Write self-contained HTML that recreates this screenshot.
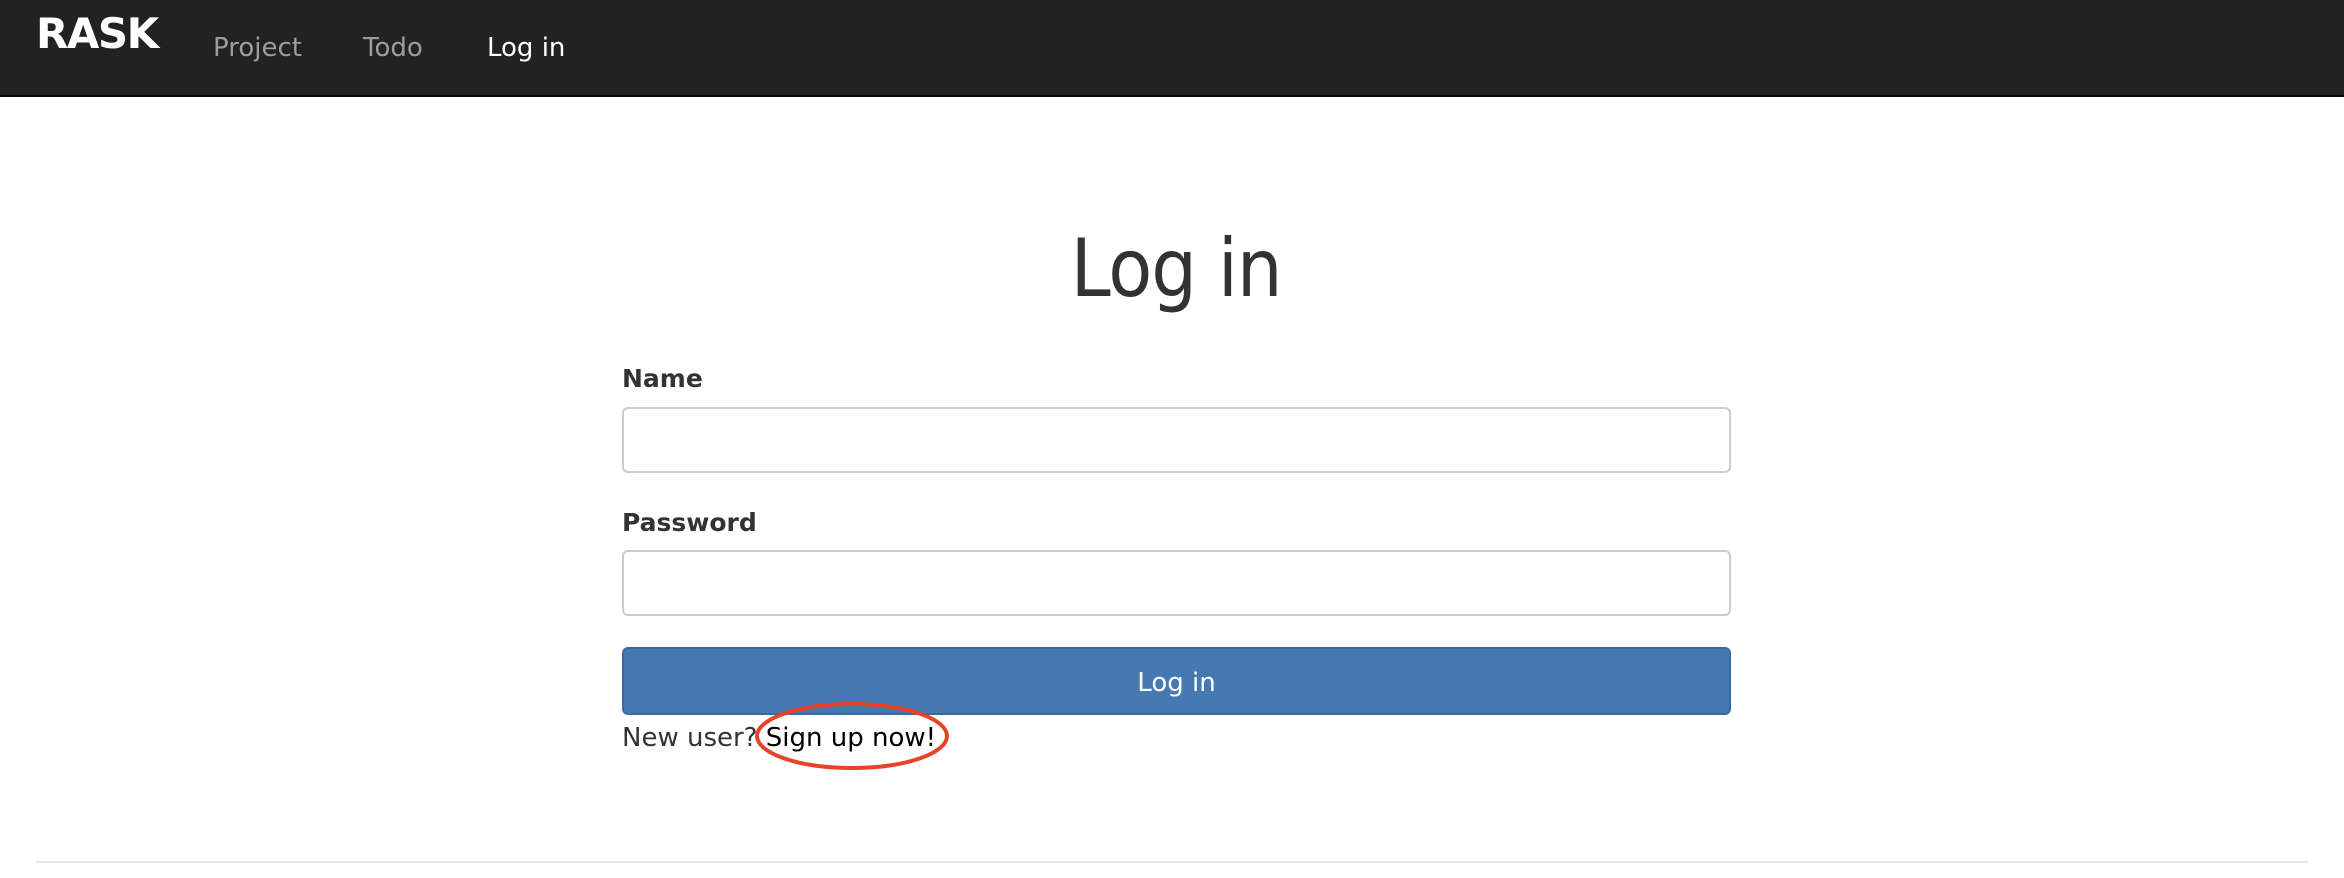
<!DOCTYPE html>
<html><head><meta charset="utf-8"><style>
*{margin:0;padding:0;box-sizing:border-box}
body{width:2344px;height:878px;background:#fff;font-family:"DejaVu Sans","Liberation Sans",sans-serif;color:#333;position:relative;overflow:hidden}
.nav{position:absolute;left:0;top:0;width:2344px;height:97px;background:#222;border-bottom:2px solid #080808}
.brand{position:absolute;left:36px;top:9px;font-weight:bold;font-size:42px;color:#fff;letter-spacing:-1.5px}
.nl{position:absolute;top:33px;font-size:26px;color:#9d9d9d}
h1{position:absolute;left:0;width:2352px;text-align:center;top:222px;font-family:"DejaVu Sans Condensed","DejaVu Sans",sans-serif;font-stretch:condensed;font-weight:normal;font-size:80px;letter-spacing:-1px;color:#333}
.lbl{position:absolute;left:622px;font-weight:bold;font-size:25px;color:#333}
.inp{position:absolute;left:622px;width:1109px;height:66px;border:2px solid #ccc;border-radius:6px;background:#fff}
.btn{position:absolute;left:622px;top:647px;width:1109px;height:68px;background:#4679b2;border:2px solid #3a6aa2;border-radius:6px;color:#fff;font-size:26px;text-align:center;line-height:68px}
.new{position:absolute;left:622px;top:723px;font-size:26px;color:#333}
.new span{color:#000}
hr{position:absolute;left:36px;top:861px;width:2272px;border:0;border-top:2px solid #e5e5e5}
</style></head><body>
<div class="nav">
<div class="brand">RASK</div>
<div class="nl" style="left:213px">Project</div>
<div class="nl" style="left:363px">Todo</div>
<div class="nl" style="left:487px;color:#fff">Log in</div>
</div>
<h1>Log in</h1>
<div class="lbl" style="top:364px">Name</div>
<div class="inp" style="top:407px"></div>
<div class="lbl" style="top:508px">Password</div>
<div class="inp" style="top:550px"></div>
<div class="btn">Log in</div>
<div class="new">New user? <span>Sign up now!</span></div>
<svg style="position:absolute;left:0;top:0" width="2344" height="878"><ellipse cx="852" cy="736" rx="95" ry="32" fill="none" stroke="#e6432a" stroke-width="4"/></svg>
<hr>
</body></html>
